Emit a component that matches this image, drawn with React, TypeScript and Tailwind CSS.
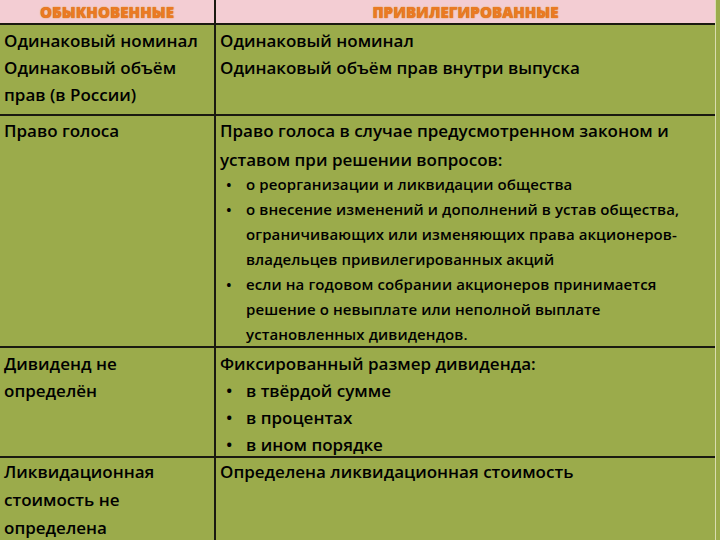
const font = "font-['Open_Sans','Noto_Sans',sans-serif]";

const Bullet = ({ children }: { children: React.ReactNode }) => (
  <div className="flex">
    <span className="w-[26px] shrink-0 pl-[6px]">•</span>
    <span>{children}</span>
  </div>
);

const headText =
  "text-[15px] font-extrabold tracking-[0.1px] text-[#eb7a22] [text-shadow:0_0_1px_#b85a18,0_0_2px_#f7d08a]";

export default function App() {
  return (
    <div className={`w-[720px] h-[540px] overflow-hidden bg-[#9bab4b] text-black ${font}`}>
      <div className="grid grid-cols-[216px_1fr] w-[716px] border-r border-[#d9dcb0]">
        {/* header */}
        <div className="h-[25px] bg-[#f3cdd3] border-b-2 border-r-2 border-[#1a1a10] flex items-center justify-center pt-[2px]">
          <span className={headText}>ОБЫКНОВЕННЫЕ</span>
        </div>
        <div className="h-[25px] bg-[#f3cdd3] border-b-2 border-[#1a1a10] flex items-center justify-center pt-[2px]">
          <span className={headText}>ПРИВИЛЕГИРОВАННЫЕ</span>
        </div>

        {/* row 1 */}
        <div className="h-[91px] border-b-2 border-r-2 border-[#1a1a10] pl-[4px] pt-[2px] text-[17px] font-semibold leading-[27px]">
          Одинаковый номинал
          <br />
          Одинаковый объём
          <br />
          прав (в России)
        </div>
        <div className="h-[91px] border-b-2 border-[#1a1a10] pl-[4px] pt-[2px] text-[17px] font-semibold leading-[27px]">
          Одинаковый номинал
          <br />
          Одинаковый объём прав внутри выпуска
        </div>

        {/* row 2 */}
        <div className="h-[232px] border-b-2 border-r-2 border-[#1a1a10] pl-[4px] text-[17px] font-semibold leading-[29px]">
          Право голоса
        </div>
        <div className="h-[232px] border-b-2 border-[#1a1a10] pl-[4px] font-semibold">
          <div className="text-[17px] leading-[29px]">
            Право голоса в случае предусмотренном законом и
            <br />
            уставом при решении вопросов:
          </div>
          <div className="text-[15px] leading-[25px] tracking-[0.1px] mt-[-2px]">
            <Bullet>о реорганизации и ликвидации общества</Bullet>
            <Bullet>
              о внесение изменений и дополнений в устав общества,
              <br />
              ограничивающих или изменяющих права акционеров-
              <br />
              владельцев привилегированных акций
            </Bullet>
            <Bullet>
              если на годовом собрании акционеров принимается
              <br />
              решение о невыплате или неполной выплате
              <br />
              установленных дивидендов.
            </Bullet>
          </div>
        </div>

        {/* row 3 */}
        <div className="h-[110px] border-b-2 border-r-2 border-[#1a1a10] pl-[4px] pt-[2px] text-[17px] font-semibold leading-[27px]">
          Дивиденд не
          <br />
          определён
        </div>
        <div className="h-[110px] border-b-2 border-[#1a1a10] pl-[4px] pt-[2px] text-[17px] font-semibold leading-[27px]">
          Фиксированный размер дивиденда:
          <Bullet>в твёрдой сумме</Bullet>
          <Bullet>в процентах</Bullet>
          <Bullet>в ином порядке</Bullet>
        </div>

        {/* row 4 */}
        <div className="h-[90px] border-r-2 border-[#1a1a10] pl-[4px] text-[17px] font-semibold leading-[28px]">
          Ликвидационная
          <br />
          стоимость не
          <br />
          определена
        </div>
        <div className="h-[90px] pl-[4px] text-[17px] font-semibold leading-[28px]">
          Определена ликвидационная стоимость
        </div>
      </div>
    </div>
  );
}
